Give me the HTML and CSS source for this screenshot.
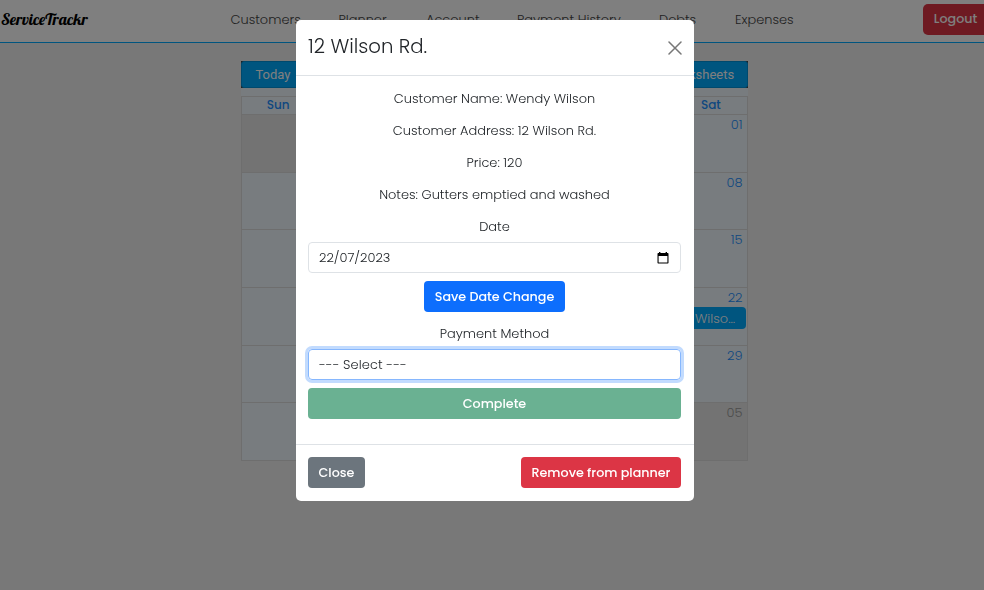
FILE: index.html
```html
<!DOCTYPE html>
<html lang="en">
<head>
<meta charset="utf-8">
<title>ServiceTrackr</title>
<link rel="stylesheet" href="styles.css">
</head>
<body>
<header class="navbar">
  <a class="brand">ServiceTrackr</a>
  <nav class="links">
    <a class="w-customers">Customers</a><a class="w-planner">Planner</a><a class="w-account">Account</a><a class="w-history">Payment History</a><a class="w-debts">Debts</a><a class="w-expenses">Expenses</a>
  </nav>
  <button class="btn logout">Logout</button>
</header>
<main class="planner">
  <div class="toolbar"><button class="tool today">Today</button><button class="tool sheets">Worksheets</button></div>
  <div class="calendar">
    <div class="days"><span>Sun</span><span></span><span></span><span></span><span></span><span></span><span>Sat</span></div>
    <div class="week"><div class="off"></div><div class="off"></div><div class="off"></div><div class="off"></div><div class="off"></div><div class="off"></div><div>01</div></div>
    <div class="week"><div></div><div></div><div></div><div></div><div></div><div></div><div>08</div></div>
    <div class="week"><div></div><div></div><div></div><div></div><div></div><div></div><div>15</div></div>
    <div class="week"><div></div><div></div><div></div><div></div><div></div><div></div><div>22<span class="event">Wilso…</span></div></div>
    <div class="week"><div></div><div></div><div></div><div></div><div></div><div></div><div>29</div></div>
    <div class="week"><div></div><div></div><div class="off"></div><div class="off"></div><div class="off"></div><div class="off"></div><div class="off">05</div></div>
  </div>
</main>
<div class="backdrop">
  <section class="modal">
    <div class="modal-header">
      <h1>12 Wilson Rd.</h1>
      <svg class="x" viewBox="0 0 14 14"><path d="M1 1L13 13M13 1L1 13"/></svg>
    </div>
    <div class="modal-body">
      <p>Customer Name: Wendy Wilson</p>
      <p>Customer Address: 12 Wilson Rd.</p>
      <p>Price: 120</p>
      <p>Notes: Gutters emptied and washed</p>
      <label>Date</label>
      <div class="field"><span>22/07/2023</span>
        <svg class="cal" viewBox="0 0 12 12"><path fill-rule="evenodd" d="M2 0h1.4v1h5.2V0H10v1h.8q.7 0 .7.8v9q0 .7-.7.7H1.2q-.7 0-.7-.7v-9q0-.8.7-.8H2zM1.6 4v6.4h8.8V4z"/></svg>
      </div>
      <button class="btn save">Save Date Change</button>
      <label>Payment Method</label>
      <div class="field focus"><span class="choice">--- Select ---</span></div>
      <button class="btn complete">Complete</button>
    </div>
    <div class="modal-footer">
      <button class="btn close">Close</button>
      <button class="btn remove">Remove from planner</button>
    </div>
  </section>
</div>
</body>
</html>
```
FILE: styles.css
```css
* { box-sizing: border-box; }
body { margin: 0; height: 590px; overflow: hidden; background: #f0f0f0; color: #212529; font: 300 12.95px/20px Poppins, Inter, sans-serif; }
button { font: inherit; border: 0; padding: 0; white-space: nowrap; }
.navbar { height: 43px; background: #fff; border-bottom: 1px solid #0af; display: flex; align-items: center; padding-bottom: 4px; }
.brand { width: 230.5px; padding-left: 1px; font: 400 16px/20px Lobster, "Liberation Serif", serif; color: #000; }
.links { display: flex; flex: 1; white-space: nowrap; padding-top: 1px; color: #444; font-weight: 400; font-size: 12.7px; }
.links a { flex: none; font-weight: 300; font-size: 12.95px; }
.w-customers { width: 108px; }
.w-planner { width: 87.5px; }
.w-account { width: 91px; }
.w-history { width: 142px; }
.w-debts { width: 76px; }
.btn { height: 31px; border-radius: 4px; color: #fff; font-weight: 500; font-size: 12.7px; }
.logout { width: 65px; flex: none; margin-right: -4px; background: #dc3545; border-radius: 5px; }
.planner { width: 507px; margin: 18px 0 0 241px; background: #f0f8ff; }
.toolbar { height: 27px; background: #444; display: flex; justify-content: space-between; }
.tool { background: #0af; color: #fff; font-size: 13px; height: 27px; border: 1px solid #0092db; border-radius: 3px; }
.today { width: 64px; font-family: Roboto, sans-serif; font-weight: 400; }
.sheets { width: 96px; font-family: Roboto, sans-serif; font-weight: 400; }
.calendar { margin-top: 8px; border: 1px solid #ddd; color: #1e90ff; }
.days { height: 17px; display: grid; grid-template-columns: repeat(7, 1fr); text-align: center; font-size: 12px; line-height: 16px; font-weight: 500; }
.week { height: 57.7px; display: grid; grid-template-columns: repeat(7, 1fr); border-top: 1px solid #ddd; text-align: right; }
.week > div { padding-right: 4.5px; border-left: 1px solid #ddd; }
.week > div:first-child { border-left: 0; }
.week > .off { background: #e6e6e6; color: #999; }
.event { display: block; height: 22px; line-height: 24px; margin: -1px -3.5px 0 0; padding-right: 11px; border-radius: 4px; background: #0af; color: #fff; }
.backdrop { position: fixed; inset: 0; background: rgba(0,0,0,.5); padding-top: 20px; }
.modal { width: 398px; height: 481px; margin-left: 296px; background: #fff; border-radius: 5px; overflow: hidden; }
.modal-header { height: 56px; border-bottom: 1px solid #dee2e6; display: flex; justify-content: space-between; align-items: center; padding: 0 12.5px 0 12px; }
h1 { margin: 0 0 3px; font-size: 19.7px; font-weight: 300; line-height: 29px; }
.x { width: 14px; height: 14px; stroke: #777; stroke-width: 1.5; stroke-linecap: round; }
.modal-body { height: 369px; padding: 13px 13px 0 12px; border-bottom: 1px solid #dee2e6; text-align: center; }
p { margin: 0 0 12px; }
label { display: block; height: 25px; }
.field { height: 31px; border: 1px solid #dee2e6; border-radius: 4px; display: flex; justify-content: space-between; align-items: center; padding: 0 11.5px 0 10px; }
.focus { border-color: #86b7fe; box-shadow: 0 0 0 3px #c2dbfe; }
.choice { letter-spacing: .1px; }
.cal { width: 12px; height: 12px; }
.save { display: block; width: 141px; margin: 8px auto 12px; background: #0d6efd; }
.complete { display: block; width: 100%; margin-top: 8px; background: #6ab192; }
.modal-footer { padding: 12px 13px 0 12px; display: flex; justify-content: space-between; }
.close { width: 57px; background: #6c757d; }
.remove { width: 160px; background: #dc3545; }
```
